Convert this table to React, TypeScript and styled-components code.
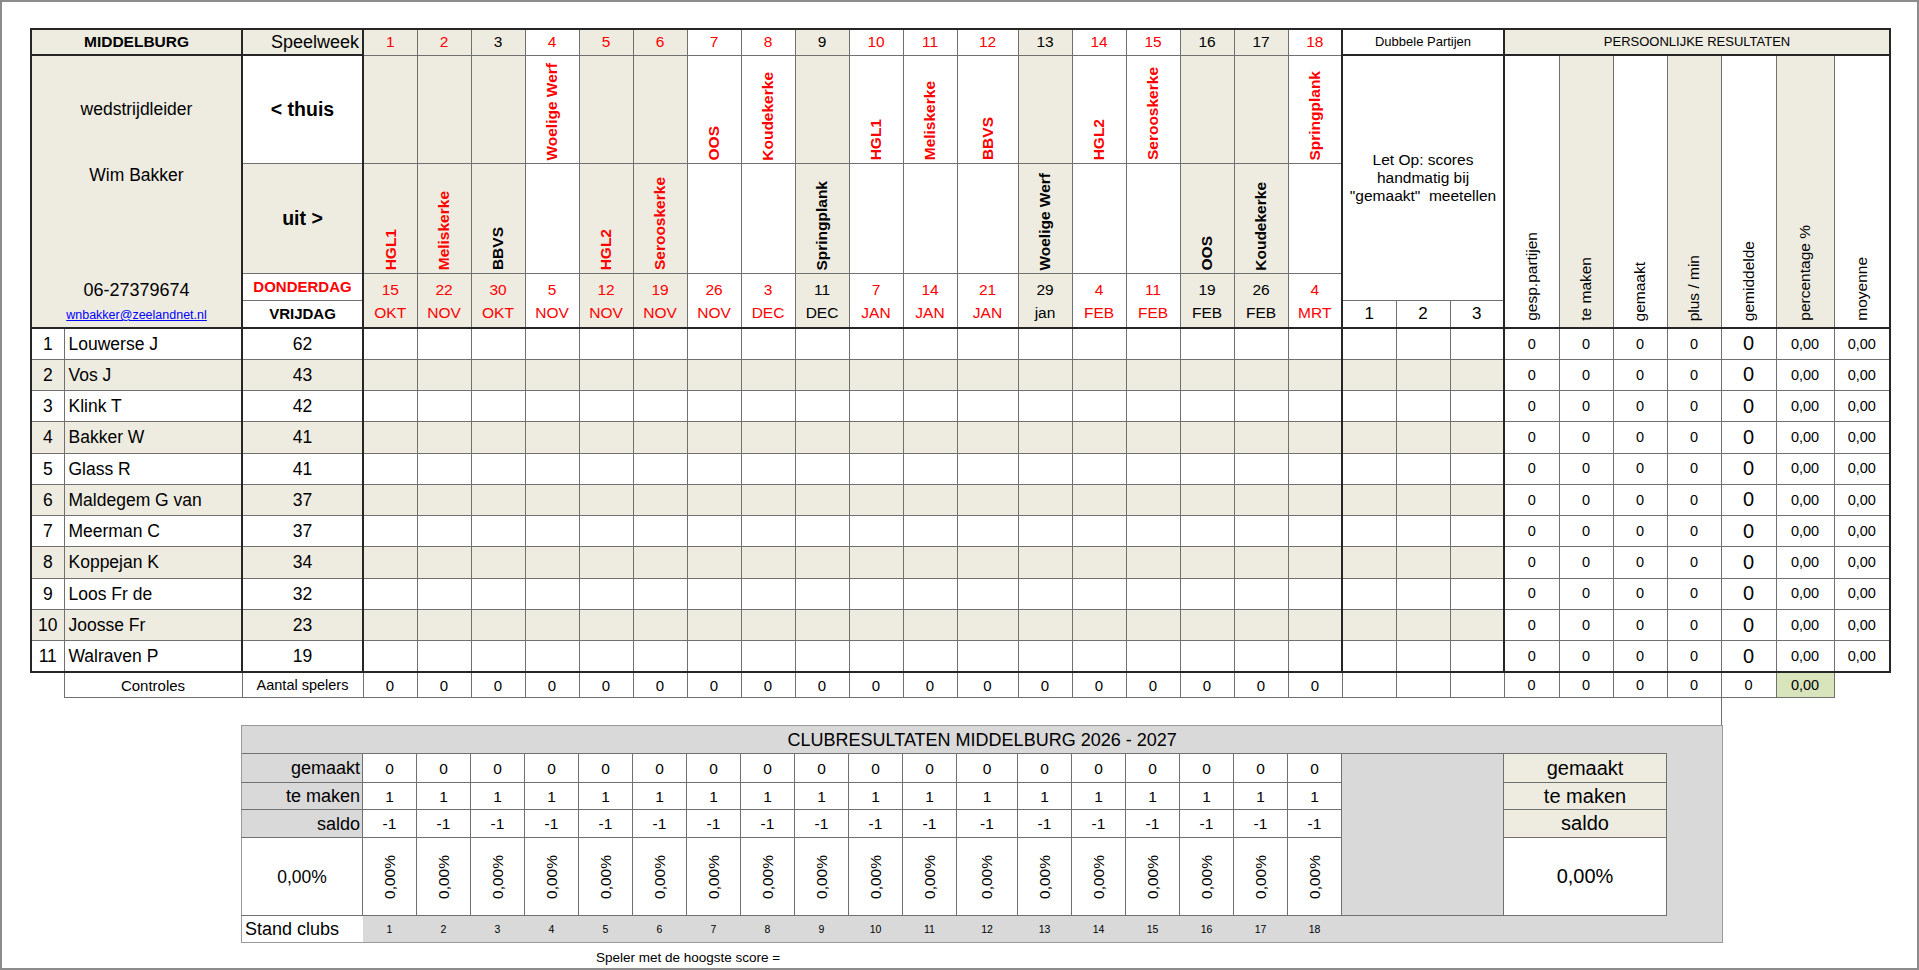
import React from 'react';
import styled, { createGlobalStyle } from 'styled-components';

const BEIGE = '#eeece1';
const GRAY = '#d9d9d9';
const GREEN = '#d8e4bc';
const RED = '#ff0000';

const GlobalStyle = createGlobalStyle`
  html, body {
    margin: 0;
    padding: 0;
    background: #fff;
  }
  body {
    font-family: "Liberation Sans", Arial, sans-serif;
    color: #000;
  }
`;

type Edge = 'line' | 'heavy' | 'soft' | 'none';

const edge = (e?: Edge) => {
  if (e === 'heavy') return '2px solid #262626';
  if (e === 'soft') return '1px solid #9a9a9a';
  if (e === 'none') return 'none';
  return '1px solid #707070';
};

type CellProps = {
  $bg?: string;
  $color?: string;
  $size?: number;
  $bold?: boolean;
  $align?: 'left' | 'center' | 'right';
  $valign?: 'top' | 'middle' | 'bottom';
  $pad?: string;
  $bl?: Edge;
  $br?: Edge;
  $bt?: Edge;
  $bb?: Edge;
  $wrap?: boolean;
};

const Page = styled.div`
  box-sizing: border-box;
  width: 1919px;
  height: 970px;
  border: 2px solid #8c8c8c;
  padding: 26px 0 0 28px;
  overflow: hidden;
`;

const Sheet = styled.table<{ $w: number }>`
  border-collapse: collapse;
  table-layout: fixed;
  width: ${p => p.$w}px;
`;

const Club = styled(Sheet)`
  margin-left: 211px;
  background: ${GRAY};
`;

const Col = styled.col<{ $w: number }>`
  width: ${p => p.$w}px;
`;

const Row = styled.tr<{ $h: number }>`
  height: ${p => p.$h}px;
`;

const Cell = styled.td<CellProps>`
  padding: ${p => p.$pad ?? '0'};
  background: ${p => p.$bg ?? '#fff'};
  color: ${p => p.$color ?? '#000'};
  font-size: ${p => p.$size ?? 15}px;
  font-weight: ${p => (p.$bold ? 700 : 400)};
  text-align: ${p => p.$align ?? 'center'};
  vertical-align: ${p => p.$valign ?? 'middle'};
  border-left: ${p => edge(p.$bl)};
  border-right: ${p => edge(p.$br)};
  border-top: ${p => edge(p.$bt)};
  border-bottom: ${p => edge(p.$bb)};
  white-space: ${p => (p.$wrap ? 'normal' : 'nowrap')};
  overflow: hidden;
  line-height: 1.15;
`;

const VBox = styled.div<{ $h: number; $pb?: number; $center?: boolean }>`
  box-sizing: border-box;
  height: ${p => p.$h}px;
  display: flex;
  justify-content: center;
  align-items: ${p => (p.$center ? 'center' : 'flex-end')};
  padding-bottom: ${p => p.$pb ?? 0}px;
`;

const VText = styled.span`
  writing-mode: vertical-rl;
  transform: rotate(180deg);
  white-space: nowrap;
  line-height: 1;
`;

const Info = styled.div`
  height: 268px;
  display: flex;
  flex-direction: column;
  align-items: center;
`;

const InfoLine = styled.div<{ $mt: number; $size: number }>`
  margin-top: ${p => p.$mt}px;
  font-size: ${p => p.$size}px;
  line-height: 20px;
`;

const Mail = styled.a`
  margin-top: 8px;
  font-size: 12.5px;
  line-height: 14px;
  color: #0000ff;
  text-decoration: underline;
`;

const DateStack = styled.div`
  display: flex;
  flex-direction: column;
  align-items: center;
  padding-top: 4px;
  line-height: 23px;
`;

const Gap = styled.div`
  height: 27px;
  padding-left: 1691px;
`;

const Tick = styled.div`
  width: 0;
  height: 100%;
  border-left: 1px solid #707070;
`;

const Note = styled.div`
  margin-top: 7px;
  padding-left: 566px;
  font-size: 13.5px;
  line-height: 16px;
`;

type Week = {
  n: number;
  home?: string;
  away?: string;
  day: string;
  mon: string;
  ink: string;
  dateInk: string;
};

const w = (n: number, day: string, mon: string, side: 'home' | 'away', name: string, ink = RED, dateInk = ink): Week => ({
  n,
  day,
  mon,
  ink,
  dateInk,
  [side]: name,
});

const weeks: Week[] = [
  w(1, '15', 'OKT', 'away', 'HGL1'),
  w(2, '22', 'NOV', 'away', 'Meliskerke'),
  w(3, '30', 'OKT', 'away', 'BBVS', '#000', RED),
  w(4, '5', 'NOV', 'home', 'Woelige Werf'),
  w(5, '12', 'NOV', 'away', 'HGL2'),
  w(6, '19', 'NOV', 'away', 'Serooskerke'),
  w(7, '26', 'NOV', 'home', 'OOS'),
  w(8, '3', 'DEC', 'home', 'Koudekerke'),
  w(9, '11', 'DEC', 'away', 'Springplank', '#000'),
  w(10, '7', 'JAN', 'home', 'HGL1'),
  w(11, '14', 'JAN', 'home', 'Meliskerke'),
  w(12, '21', 'JAN', 'home', 'BBVS'),
  w(13, '29', 'jan', 'away', 'Woelige Werf', '#000'),
  w(14, '4', 'FEB', 'home', 'HGL2'),
  w(15, '11', 'FEB', 'home', 'Serooskerke'),
  w(16, '19', 'FEB', 'away', 'OOS', '#000'),
  w(17, '26', 'FEB', 'away', 'Koudekerke', '#000'),
  w(18, '4', 'MRT', 'home', 'Springplank'),
];

const players: [string, number][] = [
  ['Louwerse J', 62],
  ['Vos J', 43],
  ['Klink T', 42],
  ['Bakker W', 41],
  ['Glass R', 41],
  ['Maldegem G van', 37],
  ['Meerman C', 37],
  ['Koppejan K', 34],
  ['Loos Fr de', 32],
  ['Joosse Fr', 23],
  ['Walraven P', 19],
];

const persLabels = ['gesp.partijen', 'te maken', 'gemaakt', 'plus / min', 'gemiddelde', 'percentage %', 'moyenne'];

const weekWidths = weeks.map(wk => (wk.n === 12 ? 61 : 54));
const mainCols = [33, 178, 121, ...weekWidths, 54, 54, 54, 55, 54, 54, 54, 55, 58, 56];
const clubCols = [121, ...weekWidths, 162, 163, 56];
const sum = (a: number[]) => a.reduce((s, x) => s + x, 0);

const shade = (wk: Week) => (wk.away ? BEIGE : '#fff');

function MainSheet() {
  return (
    <Sheet $w={sum(mainCols)}>
      <colgroup>
        {mainCols.map((c, i) => (
          <Col key={i} $w={c} />
        ))}
      </colgroup>
      <tbody>
        <Row $h={26}>
          <Cell colSpan={2} $bg={BEIGE} $bold $size={15.5} $bt="heavy" $bl="heavy" $br="heavy" $bb="heavy">
            MIDDELBURG
          </Cell>
          <Cell $bg={BEIGE} $align="right" $pad="0 3px 0 0" $size={18} $bt="heavy" $br="heavy" $bb="heavy">
            Speelweek
          </Cell>
          {weeks.map(wk => (
            <Cell key={wk.n} $bg={shade(wk)} $color={wk.ink} $size={15.5} $bt="heavy">
              {wk.n}
            </Cell>
          ))}
          <Cell colSpan={3} $size={13} $bt="heavy" $bl="heavy" $bb="heavy">
            Dubbele Partijen
          </Cell>
          <Cell colSpan={7} $bg={BEIGE} $size={13} $bt="heavy" $bl="heavy" $br="heavy" $bb="heavy">
            PERSOONLIJKE RESULTATEN
          </Cell>
        </Row>

        <Row $h={108}>
          <Cell colSpan={2} rowSpan={4} $bg={BEIGE} $valign="top" $bl="heavy" $br="heavy" $bb="heavy">
            <Info>
              <InfoLine $mt={43} $size={17.5}>wedstrijdleider</InfoLine>
              <InfoLine $mt={46} $size={17.5}>Wim Bakker</InfoLine>
              <InfoLine $mt={95} $size={18}>06-27379674</InfoLine>
              <Mail href="mailto:wnbakker@zeelandnet.nl">wnbakker@zeelandnet.nl</Mail>
            </Info>
          </Cell>
          <Cell $bold $size={19.5} $br="heavy">
            &lt; thuis
          </Cell>
          {weeks.map(wk => (
            <Cell key={wk.n} $bg={shade(wk)} $valign="bottom" $color={wk.ink} $bold $size={15.5}>
              <VBox $h={104} $pb={2}>
                {wk.home && <VText>{wk.home}</VText>}
              </VBox>
            </Cell>
          ))}
          <Cell colSpan={3} rowSpan={3} $bl="heavy" $size={15.5} $wrap>
            Let Op: scores
            <br />
            handmatig bij
            <br />
            "gemaakt"&nbsp;&nbsp;meetellen
          </Cell>
          {persLabels.map((label, i) => (
            <Cell
              key={label}
              rowSpan={4}
              $bg={i % 2 === 1 ? BEIGE : '#fff'}
              $valign="bottom"
              $size={15.5}
              $bl={i === 0 ? 'heavy' : 'line'}
              $br={i === persLabels.length - 1 ? 'heavy' : 'line'}
              $bb="heavy"
            >
              <VBox $h={268} $pb={6}>
                <VText>{label}</VText>
              </VBox>
            </Cell>
          ))}
        </Row>

        <Row $h={110}>
          <Cell $bg={BEIGE} $bold $size={19.5} $br="heavy">
            uit &gt;
          </Cell>
          {weeks.map(wk => (
            <Cell key={wk.n} $bg={shade(wk)} $valign="bottom" $color={wk.ink} $bold $size={15.5}>
              <VBox $h={106} $pb={2}>
                {wk.away && <VText>{wk.away}</VText>}
              </VBox>
            </Cell>
          ))}
        </Row>

        <Row $h={27}>
          <Cell $color={RED} $bold $size={15} $br="heavy">
            DONDERDAG
          </Cell>
          {weeks.map(wk => (
            <Cell key={wk.n} rowSpan={2} $bg={shade(wk)} $valign="top" $color={wk.dateInk} $size={15.5} $bb="heavy">
              <DateStack>
                <span>{wk.day}</span>
                <span>{wk.mon}</span>
              </DateStack>
            </Cell>
          ))}
        </Row>

        <Row $h={28}>
          <Cell $bold $size={15} $br="heavy" $bb="heavy">
            VRIJDAG
          </Cell>
          {[1, 2, 3].map(n => (
            <Cell key={n} $size={17} $bl={n === 1 ? 'heavy' : 'line'} $bb="heavy">
              {n}
            </Cell>
          ))}
        </Row>

        {players.map(([name, score], i) => {
          const bg = i % 2 === 1 ? BEIGE : '#fff';
          const last = i === players.length - 1;
          const bb: Edge = last ? 'heavy' : 'line';
          return (
            <Row key={name} $h={31.27}>
              <Cell $bg={bg} $size={17.5} $bl="heavy" $bb={bb}>
                {i + 1}
              </Cell>
              <Cell $bg={bg} $size={17.5} $align="left" $pad="0 0 0 4px" $br="heavy" $bb={bb}>
                {name}
              </Cell>
              <Cell $bg={bg} $size={17.5} $br="heavy" $bb={bb}>
                {score}
              </Cell>
              {weeks.map(wk => (
                <Cell key={wk.n} $bg={bg} $bb={bb} />
              ))}
              {[1, 2, 3].map(n => (
                <Cell key={n} $bg={bg} $bl={n === 1 ? 'heavy' : 'line'} $bb={bb} />
              ))}
              <Cell $size={14.5} $bl="heavy" $bb={bb}>0</Cell>
              <Cell $size={14.5} $bb={bb}>0</Cell>
              <Cell $size={14.5} $bb={bb}>0</Cell>
              <Cell $size={14.5} $bb={bb}>0</Cell>
              <Cell $size={20} $bb={bb}>0</Cell>
              <Cell $size={14.5} $bb={bb}>0,00</Cell>
              <Cell $size={14.5} $br="heavy" $bb={bb}>0,00</Cell>
            </Row>
          );
        })}

        <Row $h={26}>
          <Cell $bl="none" $bb="none" $bg="transparent" />
          <Cell $size={15}>Controles</Cell>
          <Cell $size={14.5}>Aantal spelers</Cell>
          {weeks.map(wk => (
            <Cell key={wk.n} $size={15}>0</Cell>
          ))}
          <Cell />
          <Cell />
          <Cell />
          <Cell $size={14.5}>0</Cell>
          <Cell $size={14.5}>0</Cell>
          <Cell $size={14.5}>0</Cell>
          <Cell $size={14.5}>0</Cell>
          <Cell $size={14.5}>0</Cell>
          <Cell $size={14.5} $bg={GREEN}>0,00</Cell>
          <Cell $br="none" $bb="none" $bg="transparent" />
        </Row>
      </tbody>
    </Sheet>
  );
}

function ClubSheet() {
  const counts: [string, string][] = [
    ['gemaakt', '0'],
    ['te maken', '1'],
    ['saldo', '-1'],
  ];
  return (
    <Club $w={sum(clubCols)}>
      <colgroup>
        {clubCols.map((c, i) => (
          <Col key={i} $w={c} />
        ))}
      </colgroup>
      <tbody>
        <Row $h={28}>
          <Cell colSpan={clubCols.length} $bg={GRAY} $size={18} $bt="soft" $bl="soft" $br="soft" $bb="none">
            CLUBRESULTATEN MIDDELBURG 2026 - 2027
          </Cell>
        </Row>
        {counts.map(([label, value], r) => (
          <Row key={label} $h={r === 0 ? 29 : r === 1 ? 27 : 28}>
            <Cell $bg={GRAY} $align="right" $pad="0 2px 0 0" $size={18} $bl="soft">
              {label}
            </Cell>
            {weeks.map(wk => (
              <Cell key={wk.n} $size={15.5}>
                {value}
              </Cell>
            ))}
            {r === 0 && <Cell rowSpan={4} $bg={GRAY} />}
            <Cell $bg={BEIGE} $size={20}>
              {label}
            </Cell>
            {r === 0 && <Cell rowSpan={4} $bg={GRAY} $bt="none" $bb="none" $br="soft" />}
          </Row>
        ))}
        <Row $h={78}>
          <Cell $size={17.5} $bl="soft">
            0,00%
          </Cell>
          {weeks.map(wk => (
            <Cell key={wk.n} $size={15.5}>
              <VBox $h={74} $center>
                <VText>0,00%</VText>
              </VBox>
            </Cell>
          ))}
          <Cell $size={20}>0,00%</Cell>
        </Row>
        <Row $h={27}>
          <Cell $align="left" $pad="0 0 0 3px" $size={18} $bl="soft" $bb="soft" $br="none">
            Stand clubs
          </Cell>
          {weeks.map(wk => (
            <Cell key={wk.n} $bg={GRAY} $size={10.5} $bl="none" $br="none" $bb="soft">
              {wk.n}
            </Cell>
          ))}
          <Cell colSpan={3} $bg={GRAY} $bl="none" $bt="none" $br="soft" $bb="soft" />
        </Row>
      </tbody>
    </Club>
  );
}

export default function App() {
  return (
    <>
      <GlobalStyle />
      <Page>
        <MainSheet />
        <Gap>
          <Tick />
        </Gap>
        <ClubSheet />
        <Note>Speler met de hoogste score =</Note>
      </Page>
    </>
  );
}
